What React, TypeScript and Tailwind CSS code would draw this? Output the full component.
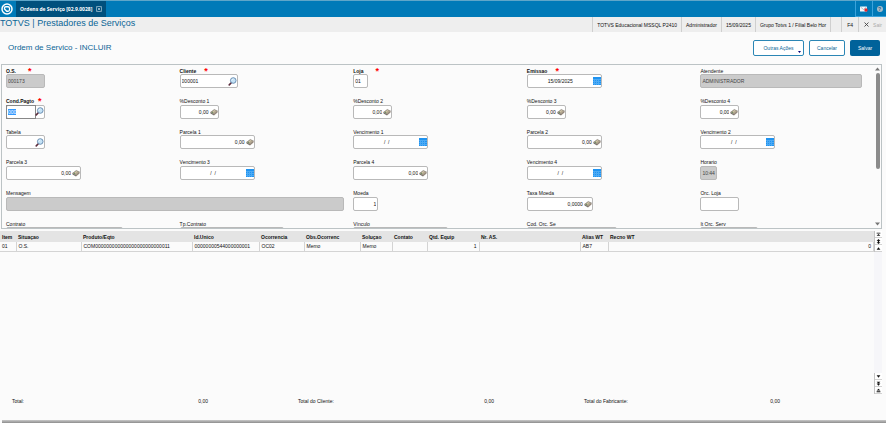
import React from 'react';

const MagnifierIcon = () => (
  <svg width="9" height="9" viewBox="0 0 18 18" aria-hidden="true">
    <path d="M6.5 11.5L2.5 15.8" stroke="#5b2c3c" strokeWidth="3.2" strokeLinecap="round" />
    <circle cx="10.5" cy="7" r="5.6" fill="#c5e2f5" stroke="#5f86ad" strokeWidth="1.8" />
    <path d="M7.5 6.5a3.4 3.4 0 0 1 3-2.6" stroke="#fff" strokeWidth="1.6" fill="none" />
  </svg>
);

const CalcIcon = () => (
  <svg width="8" height="8" viewBox="0 0 16 16" aria-hidden="true">
    <path d="M1 8.5L8.5 3l6.5 3-7 6.5z" fill="#b5a98f" stroke="#6c6660" strokeWidth="1" />
    <path d="M1 8.5v2.3l7 4V12.5z" fill="#77706b" />
    <path d="M8 12.5v2.3l7-5.8V6z" fill="#8d7f72" />
    <path d="M6 7.500l4-2.700" stroke="#e4dcc2" strokeWidth="1.2" />
    <circle cx="5" cy="9" r="1.3" fill="#6f9464" />
  </svg>
);

const CalendarIcon = () => (
  <svg width="8" height="8" viewBox="0 0 8 8" aria-hidden="true" shapeRendering="crispEdges">
    <rect width="8" height="8" fill="#1f93f0" />
    <path d="M0 2.5h8M0 4.5h8M0 6.5h8M1.5 2v6M3.5 2v6M5.5 2v6" stroke="#6dbaf8" strokeWidth="1" opacity=".6" />
  </svg>
);

const icons = {
  search: { icon: <MagnifierIcon />, title: 'Pesquisar' },
  calc: { icon: <CalcIcon />, title: 'Calculadora' },
  date: { icon: <CalendarIcon />, title: 'Calendario' },
};

type FieldProps = {
  id: string;
  label: string;
  width: string;
  value?: string;
  icon?: 'search' | 'calc' | 'date';
  align?: string;
  star?: string;
  disabled?: boolean;
  focused?: boolean;
  cell?: string;
};

const Field = ({ id, label, width, value = '', icon, align = '', star, disabled, focused, cell = '' }: FieldProps) => {
  return (
    <div className={`min-w-0 ${cell}`}>
      <div className="flex h-[7px] items-center whitespace-nowrap">
        <label htmlFor={id} className={star ? 'font-bold' : ''}>{label}</label>
        {star && <span className={`${star} h-2 text-[9px] leading-[9px] font-bold text-[#f00]`}>*</span>}
      </div>
      <div className={`flex h-3.5 items-center rounded-xs border border-[#b9b9b9] ${disabled ? 'bg-[#cbcbcb]' : 'bg-white'} ${width}`}>
        <input
          id={id}
          type="text"
          defaultValue={value}
          disabled={disabled}
          autoFocus={focused}
          onFocus={(e) => e.target.select()}
          className={`h-full w-full min-w-0 flex-1 px-px outline-none selection:bg-[#3399ff] selection:text-white disabled:text-[#444] ${align} ${focused ? 'ring-1 ring-[#888]' : ''}`}
        />
        {icon && (
          <button type="button" title={icons[icon].title} className="shrink-0">
            {icons[icon].icon}
          </button>
        )}
      </div>
    </div>
  );
};

const fields: FieldProps[] = [
  { id: 'os', label: 'O.S.', width: 'w-[39px]', value: '000173', star: 'ml-3', disabled: true },
  { id: 'cliente', label: 'Cliente', width: 'w-[58px]', value: '000001', icon: 'search', star: 'ml-2' },
  { id: 'loja', label: 'Loja', width: 'w-[15px]', value: '01', star: 'ml-3' },
  { id: 'emissao', label: 'Emissao', width: 'w-[75px]', value: '15/09/2025', icon: 'date', align: 'text-center', star: 'ml-2' },
  { id: 'atendente', label: 'Atendente', width: 'w-[162px]', value: 'ADMINISTRADOR', disabled: true },

  { id: 'condpagto', label: 'Cond.Pagto', width: 'w-[39px]', value: '000', icon: 'search', star: 'ml-1', focused: true },
  { id: 'desconto1', label: '%Desconto 1', width: 'w-[39px]', value: '0,00', icon: 'calc', align: 'text-right' },
  { id: 'desconto2', label: '%Desconto 2', width: 'w-[39px]', value: '0,00', icon: 'calc', align: 'text-right' },
  { id: 'desconto3', label: '%Desconto 3', width: 'w-[39px]', value: '0,00', icon: 'calc', align: 'text-right' },
  { id: 'desconto4', label: '%Desconto 4', width: 'w-[39px]', value: '0,00', icon: 'calc', align: 'text-right' },

  { id: 'tabela', label: 'Tabela', width: 'w-[39px]', icon: 'search' },
  { id: 'parcela1', label: 'Parcela 1', width: 'w-[75px]', value: '0,00', icon: 'calc', align: 'text-right' },
  { id: 'vencimento1', label: 'Vencimento 1', width: 'w-[75px]', value: '/  /', icon: 'date', align: 'text-center' },
  { id: 'parcela2', label: 'Parcela 2', width: 'w-[75px]', value: '0,00', icon: 'calc', align: 'text-right' },
  { id: 'vencimento2', label: 'Vencimento 2', width: 'w-[75px]', value: '/  /', icon: 'date', align: 'text-center' },

  { id: 'parcela3', label: 'Parcela 3', width: 'w-[75px]', value: '0,00', icon: 'calc', align: 'text-right' },
  { id: 'vencimento3', label: 'Vencimento 3', width: 'w-[75px]', value: '/  /', icon: 'date', align: 'text-center' },
  { id: 'parcela4', label: 'Parcela 4', width: 'w-[75px]', value: '0,00', icon: 'calc', align: 'text-right' },
  { id: 'vencimento4', label: 'Vencimento 4', width: 'w-[75px]', value: '/  /', icon: 'date', align: 'text-center' },
  { id: 'horario', label: 'Horario', width: 'w-[17px]', value: '10:44', disabled: true },

  { id: 'mensagem', label: 'Mensagem', width: 'mr-[9px]', disabled: true, cell: 'col-span-2' },
  { id: 'moeda', label: 'Moeda', width: 'w-[25px]', value: '1', align: 'text-right' },
  { id: 'taxa', label: 'Taxa Moeda', width: 'w-[66px]', value: '0,0000', icon: 'calc', align: 'text-right' },
  { id: 'orcloja', label: 'Orc. Loja', width: 'w-[39px]' },

  { id: 'contrato', label: 'Contrato', width: 'w-[117px]' },
  { id: 'tpcontrato', label: 'Tp.Contrato', width: 'w-[104px]' },
  { id: 'vinculo', label: 'Vínculo', width: 'w-[95px]' },
  { id: 'codorc', label: 'Cod. Orc. Se', width: 'w-[90px]' },
  { id: 'itorc', label: 'It Orc. Serv', width: 'w-[58px]' },
];

const columns = [
  { name: 'Item', width: 'w-4', value: '01' },
  { name: 'Situaçao', width: 'w-[65px]', value: 'O.S.' },
  { name: 'Produto/Eqto', width: 'w-[111px]', value: 'COM000000000000000000000000011' },
  { name: 'Id.Unico', width: 'w-[67px]', value: '00000000544000000001' },
  { name: 'Ocorrencia', width: 'w-[45px]', value: 'OC02' },
  { name: 'Obs.Ocorrenc', width: 'w-14', value: 'Memo' },
  { name: 'Soluçao', width: 'w-8', value: 'Memo' },
  { name: 'Contato', width: 'w-[35px]', value: '' },
  { name: 'Qtd. Equip', width: 'w-[52px]', value: '1', align: 'text-right' },
  { name: 'Nr. AS.', width: 'w-[101px]', value: '' },
  { name: 'Alias WT', width: 'w-7', value: 'AB7' },
  { name: 'Recno WT', width: '', value: '0', align: 'text-right' },
];

const totals = [
  { name: 'Total:', value: '0,00' },
  { name: 'Total do Cliente:', value: '0,00' },
  { name: 'Total do Fabricante:', value: '0,00' },
];

const gridArrows = {
  first: 'M1 1h6v1.4H1zM4 3l3 3H1z',
  pageUp: 'M4 0l3 3H1zM3 3h2v2h2L4 8 1 5h2z',
  up: 'M4 2l3 4H1z',
  down: 'M4 6L1 2h6z',
  pageDown: 'M1 1h6L4 4zM1 4h6L4 7.5z',
  last: 'M4 1l3 3H1zM1 5h6v1.6H1z',
};

const GridArrow = ({ kind, label }: { kind: keyof typeof gridArrows; label: string }) => (
  <button type="button" aria-label={label} className="flex h-[7px] w-full items-center justify-center border-b border-[#d2d2d2] bg-white">
    <svg width="5" height="5" viewBox="0 0 8 8" fill="#111">
      <path d={gridArrows[kind]} />
    </svg>
  </button>
);

const TopBar = () => (
  <header className="flex h-[17px] items-stretch border-t border-[#5fa6c9] bg-[#007ab8] text-white">
    <a href="#" aria-label="TOTVS" className="flex w-4 items-center pl-px">
      <svg width="12" height="12" viewBox="0 0 24 24">
        <circle cx="12" cy="12" r="10" fill="none" stroke="#fff" strokeWidth="3" />
        <path d="M7 13V10q0-2.500 2.500-2.500H14q3 0 3 3v3q0 3-3 3h-2.500L7 12" fill="none" stroke="#fff" strokeWidth="2.600" />
      </svg>
    </a>
    <div className="flex items-center gap-1 bg-[#00507d] px-1 font-['Open_Sans',sans-serif] font-bold">
      <span className="whitespace-nowrap">Ordens de Serviço [02.9.0028]</span>
      <button type="button" aria-label="Fechar">
        <svg width="6" height="6" viewBox="0 0 12 12" fill="none" stroke="#d5e6f0" strokeWidth="1.3">
          <rect x=".8" y=".8" width="10.4" height="10.4" rx="1.5" />
          <path d="M3.5 3.5l5 5M8.5 3.5l-5 5" />
        </svg>
      </button>
    </div>
    <button type="button" aria-label="Mensagens" className="ml-auto flex w-[18px] items-center justify-center border-x border-b border-[#3ba3dc]">
      <svg width="8" height="6" viewBox="0 0 16 12">
        <rect y="1" width="14" height="10" rx="1" fill="#f4f8fb" />
        <path d="M1 2l6 5 6-5" fill="none" stroke="#7e9fb5" strokeWidth="1.3" />
        <circle cx="12" cy="8" r="3.4" fill="#e3262d" />
      </svg>
    </button>
    <button type="button" aria-label="Ajuda" className="flex w-[13px] items-center justify-center border-b border-[#3ba3dc]">
      <span className="flex h-1.5 w-1.5 items-center justify-center rounded-full bg-[#a9bdca] font-bold text-[#175b83]">?</span>
    </button>
  </header>
);

const StatusBar = () => (
  <div className="flex h-[15px] items-stretch bg-[#eee]">
    <h1 className="flex-1 text-[9px] leading-[13px] whitespace-nowrap text-[#0b6596]">TOTVS | Prestadores de Serviços</h1>
    <div className="flex items-center divide-x divide-[#cfcfcf] border-l border-[#cfcfcf] whitespace-nowrap *:flex *:h-full *:items-center">
      <span className="px-1">TOTVS Educacional MSSQL P2410</span>
      <span className="px-1">Administrador</span>
      <span className="px-1">15/09/2025</span>
      <span className="px-1">Grupo Totvs 1 / Filial Belo Hor</span>
      <span className="w-[11px]"></span>
      <button type="button" className="px-[5px]">F4</button>
      <button type="button" className="gap-1 pr-1 pl-[5px] text-[#aaa]">
        <svg width="5" height="5" viewBox="0 0 10 10" stroke="#444" strokeWidth="1.8">
          <path d="M1 1l8 8M9 1l-8 8" />
        </svg>
        Sair
      </button>
    </div>
  </div>
);

export const App = () => {
  return (
    <div className="flex min-h-screen flex-col overflow-hidden bg-[#fbfbfb] font-['Liberation_Sans',Arial,sans-serif] text-[5px] leading-[6px] text-[#111]">
      <TopBar />
      <StatusBar />

      <div className="flex h-8 items-center pr-1.5 pl-2 text-[#0b6596]">
        <h2 className="flex-1 text-[8px] leading-3">Ordem de Servico - INCLUIR</h2>
        <div className="flex gap-[5px]">
          <button type="button" className="relative h-4 w-[51px] rounded-xs border border-[#2b86b5] bg-white">
            Outras Ações
            <svg className="absolute right-0.5 bottom-0.5" width="3" height="2" viewBox="0 0 6 4" fill="#00007a">
              <path d="M0 0h6L3 4z" />
            </svg>
          </button>
          <button type="button" className="h-4 w-9 rounded-xs border border-[#2b86b5] bg-white">Cancelar</button>
          <button type="button" className="h-4 w-[30px] rounded-xs bg-[#00629a] text-white">Salvar</button>
        </div>
      </div>

      <form className="mr-1 ml-px flex h-[165px] overflow-hidden border border-[#bcc3c5]">
        <div className="grid h-[186px] min-w-0 flex-1 grid-cols-5 grid-rows-6 pt-0.5 pl-1">
          {fields.map((field) => (
            <Field key={field.id} {...field} />
          ))}
        </div>
        <div className="flex w-[7px] flex-col items-center py-0.5">
          <svg width="5" height="4" viewBox="0 0 10 8" fill="#777"><path d="M5 1l5 6H0z" /></svg>
          <div className="mt-0.5 h-24 w-1 rounded-full bg-[#8b8b8b]"></div>
          <svg className="mt-auto" width="5" height="4" viewBox="0 0 10 8" fill="#777"><path d="M5 7L0 1h10z" /></svg>
        </div>
      </form>

      <div className="mt-0.5 mr-1 flex flex-1">
        <div className="min-w-0 flex-1">
          <table className="w-full table-fixed border-collapse text-left whitespace-nowrap">
            <thead>
              <tr className="h-[11px] bg-[#e4e4e4]">
                {columns.map((col) => (
                  <th key={col.name} className={`p-0 pl-0.5 font-bold ${col.width}`}>{col.name}</th>
                ))}
              </tr>
            </thead>
            <tbody>
              <tr className="h-[9px] border-b border-[#d4d4d4]">
                {columns.map((col) => (
                  <td key={col.name} className={`border-r border-[#d4d4d4] p-0 px-0.5 ${col.align || ''}`}>{col.value}</td>
                ))}
              </tr>
            </tbody>
          </table>
        </div>
        <div className="flex w-2 flex-col bg-[#f6f6f9]">
          <div className="border-l border-[#c4c4c4]">
            <GridArrow kind="first" label="Primeiro" />
            <GridArrow kind="pageUp" label="Pagina acima" />
            <GridArrow kind="up" label="Acima" />
          </div>
          <div className="mt-auto border-l border-[#c4c4c4]">
            <GridArrow kind="down" label="Abaixo" />
            <GridArrow kind="pageDown" label="Pagina abaixo" />
            <GridArrow kind="last" label="Ultimo" />
          </div>
        </div>
      </div>

      <div className="grid grid-cols-3 pt-1 pr-4 pb-4 pl-3">
        {totals.map((total) => (
          <div key={total.name} className="flex w-49 justify-between">
            <span>{total.name}</span>
            <span>{total.value}</span>
          </div>
        ))}
      </div>
      <div className="ml-0.5 h-[3px] bg-linear-to-b from-[#c9c9c9] to-[#8d8d8d]"></div>
    </div>
  );
};

export default App;
